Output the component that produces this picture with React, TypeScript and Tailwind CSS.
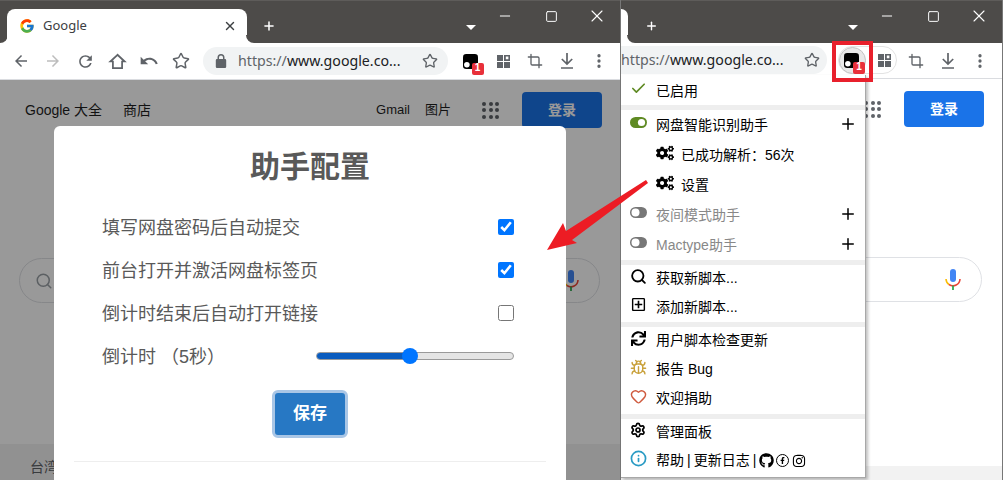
import type { ReactNode } from "react";
import { Bug, Check, Crop, Heart, Info, Minus, MoreVertical, Plus, Search, Settings, Square, Star, X } from "lucide-react";
import { FaCogs, FaFacebookF, FaGithub, FaInstagram, FaRegPlusSquare, FaSync } from "react-icons/fa";
import { FcGoogle } from "react-icons/fc";

const BAR = "bg-[#4d4b49]";

function Flare({ side }: { side: "l" | "r" }) {
  return (
    <div className="h-2 w-2 bg-white">
      <div className={`h-full w-full ${BAR} ${side === "l" ? "rounded-br-[8px]" : "rounded-bl-[8px]"}`} />
    </div>
  );
}

function Caret() {
  return <div className="mt-[24px] h-0 w-0 border-x-[5px] border-t-[5px] border-x-transparent border-t-white" />;
}

function WindowControls() {
  return (
    <div className="ml-[6px] flex text-white">
      <div className="flex h-[30px] w-[46px] items-center justify-center">
        <Minus size={16} strokeWidth={1.5} />
      </div>
      <div className="flex h-[30px] w-[46px] items-center justify-center">
        <Square size={13} strokeWidth={1.8} />
      </div>
      <div className="flex h-[30px] w-[46px] items-center justify-center">
        <X size={20} strokeWidth={1.3} />
      </div>
    </div>
  );
}

function ToolCell({ children }: { children: ReactNode }) {
  return <div className="flex h-[36px] w-[32px] shrink-0 items-center justify-center text-[#5f6368]">{children}</div>;
}

function NavIcons() {
  return (
    <>
      <ToolCell>
        <svg width="18" height="18" viewBox="0 0 24 24" fill="currentColor">
          <path d="M20 11H7.83l5.59-5.59L12 4l-8 8 8 8 1.41-1.41L7.83 13H20v-2z" />
        </svg>
      </ToolCell>
      <ToolCell>
        <svg width="18" height="18" viewBox="0 0 24 24" fill="#bdbdbd">
          <path d="M4 11h12.17l-5.59-5.59L12 4l8 8-8 8-1.41-1.41L16.17 13H4v-2z" />
        </svg>
      </ToolCell>
      <ToolCell>
        <svg width="19" height="19" viewBox="0 0 24 24" fill="currentColor">
          <path d="M17.65 6.35C16.2 4.9 14.21 4 12 4c-4.42 0-7.99 3.58-7.99 8s3.57 8 7.99 8c3.73 0 6.84-2.55 7.73-6h-2.08c-.82 2.33-3.04 4-5.65 4-3.31 0-6-2.69-6-6s2.69-6 6-6c1.66 0 3.14.69 4.22 1.78L13 11h7V4l-2.35 2.35z" />
        </svg>
      </ToolCell>
      <ToolCell>
        <svg width="19" height="19" viewBox="0 0 24 24" fill="none" stroke="currentColor" strokeWidth="2.2">
          <path d="M12 3.5 3 12h3.2v8.5h11.6V12H21z" />
        </svg>
      </ToolCell>
      <ToolCell>
        <svg width="20" height="20" viewBox="0 0 24 24" fill="currentColor">
          <path d="M12.5 8c-2.65 0-5.05.99-6.9 2.6L2 7v9h9l-3.62-3.62c1.39-1.16 3.16-1.88 5.12-1.88 3.54 0 6.55 2.31 7.6 5.5l2.37-.78C21.08 11.03 17.15 8 12.5 8z" />
        </svg>
      </ToolCell>
      <ToolCell>
        <Star size={18} strokeWidth={2} />
      </ToolCell>
    </>
  );
}

function ExtIcon() {
  return (
    <div className="relative h-[15px] w-[15px] -translate-x-[1px]">
      <svg width="15" height="15" viewBox="0 0 14 14">
        <path d="M3 0h8a3 3 0 0 1 3 3v8a3 3 0 0 1-3 3H3a3 3 0 0 1-3-3V3a3 3 0 0 1 3-3z" fill="#000" />
        <circle cx="3.6" cy="10" r="2.6" fill="#fff" />
      </svg>
      <div className="absolute left-[9px] top-[9px] flex h-[12px] w-[12px] items-center justify-center rounded-[2px] bg-[#e8303a] pb-[1px] text-[10px] font-bold leading-none text-white">
        1
      </div>
    </div>
  );
}

function GridIcon() {
  return (
    <svg width="13" height="13" viewBox="0 0 13 13" fill="#5f6368">
      <rect width="6" height="6" />
      <rect y="7" width="6" height="6" />
      <rect x="7" y="7" width="6" height="6" />
      <path d="M7 0h6v6H7zM8.8 1.6v2.6h2.6V1.6z" fillRule="evenodd" />
    </svg>
  );
}

function DownloadIcon() {
  return (
    <svg width="14" height="16" viewBox="0 0 14 16" fill="none" stroke="currentColor" strokeWidth="1.7">
      <path d="M7 0v11M1.8 6 7 11l5.2-5M1 15h12" />
    </svg>
  );
}

function DotsIcon() {
  return <MoreVertical size={18} strokeWidth={2.4} />;
}

function MicIcon() {
  return (
    <svg width="16" height="21" viewBox="0 0 16 21" fill="none">
      <rect x="5" y="0" width="6" height="13" rx="3" fill="#4285f4" />
      <path d="M1 10a7 7 0 0 0 3 5.5" stroke="#fbbc05" strokeWidth="1.6" />
      <path d="M4 15.5a7 7 0 0 0 11-5.5" stroke="#ea4335" strokeWidth="1.6" />
      <path d="M8 16.5V21" stroke="#34a853" strokeWidth="1.8" />
    </svg>
  );
}

// the right window's page is mostly behind the menu, so its links are left out
function GooglePage({ footer, links }: { footer: string; links?: boolean }) {
  return (
    <div className="flex min-h-0 flex-1 flex-col bg-white">
      <div className="flex h-[48px] shrink-0 items-start pl-[25px] pr-[18px] pt-[12px] text-[14px] text-[#1f1f1f]">
        {links && (
          <div className="flex h-[36px] items-center gap-[21px]">
            <span>Google 大全</span>
            <span>商店</span>
          </div>
        )}
        <div className="ml-auto flex h-[36px] shrink-0 items-center">
          {links && (
            <>
              <span className="text-[13px]">Gmail</span>
              <span className="ml-[15px] text-[13px]">图片</span>
            </>
          )}
          <div className="ml-[31px] grid grid-cols-3 gap-[2.5px]">
            {Array.from({ length: 9 }).map((_, i) => (
              <div key={i} className="h-1 w-1 rounded-full bg-[#5f6368]" />
            ))}
          </div>
          <div className="ml-[23px] flex h-[36px] w-[80px] shrink-0 items-center justify-center rounded-[4px] bg-[#1a73e8] text-[14px] font-bold text-white">
            登录
          </div>
        </div>
      </div>
      <div className="ml-[19px] mr-[20px] mt-[130px] flex h-[45px] shrink-0 items-center justify-between rounded-full border border-[#dfe1e5] pl-[15px] pr-[20px]">
        <Search size={18} className="text-[#9aa0a6]" />
        <MicIcon />
      </div>
      <div className={`mt-auto shrink-0 bg-[#f2f2f2] pl-[30px] pt-[13px] text-[14px] text-[#5f6368] ${footer}`}>
        {links && "台湾"}
      </div>
    </div>
  );
}

function ConfigRow({ label, children }: { label: string; children: ReactNode }) {
  return (
    <div className="flex h-[43px] items-center justify-between">
      <span className="pt-[2px]">{label}</span>
      {children}
    </div>
  );
}

function ConfigModal() {
  return (
    <div className="ml-[54px] mt-[46px] h-[400px] w-[512px] rounded-t-[6px] bg-white text-[#595959]">
      <div className="pt-[18px] text-center text-[30px] font-bold leading-[46px]">助手配置</div>
      <div className="mt-[16px] pl-[48px] pr-[52px] text-[18px]">
        <ConfigRow label="填写网盘密码后自动提交">
          <input type="checkbox" defaultChecked className="mb-[2px] h-4 w-4 accent-[#0075ff]" />
        </ConfigRow>
        <ConfigRow label="前台打开并激活网盘标签页">
          <input type="checkbox" defaultChecked className="mb-[2px] h-4 w-4 accent-[#0075ff]" />
        </ConfigRow>
        <ConfigRow label="倒计时结束后自动打开链接">
          <input type="checkbox" className="mb-[2px] h-4 w-4 accent-[#0075ff]" />
        </ConfigRow>
        <ConfigRow label="倒计时 （5秒）">
          <div className="relative mb-[2px] h-2 w-[198px]">
            <div className="h-full w-full overflow-hidden rounded-full border border-[#9a9a9a] bg-[#e5e5e5]">
              <div className="h-full w-[47%] bg-[#0a5cbf]" />
            </div>
            <div className="absolute left-[86px] top-[-4px] h-4 w-4 rounded-full bg-[#0075ff]" />
          </div>
        </ConfigRow>
      </div>
      <div className="mt-[12px] flex justify-center">
        <div className="flex h-[48px] w-[76px] items-center justify-center rounded-[6px] border-[3px] border-[#a9c6e6] bg-[#2778c4] text-[17px] font-bold text-white">
          保存
        </div>
      </div>
      <div className="mx-[20px] mt-[23px] border-t border-[#eeeeee]" />
    </div>
  );
}

function Toggle({ on }: { on?: boolean }) {
  return on ? (
    <svg width="17" height="11" viewBox="0 0 17 11">
      <rect width="17" height="11" rx="5.5" fill="#5f8a23" />
      <circle cx="11.5" cy="5.5" r="3.6" fill="#fff" />
    </svg>
  ) : (
    <svg width="17" height="11" viewBox="0 0 17 11">
      <rect width="17" height="11" rx="5.5" fill="#777" />
      <circle cx="5.5" cy="5.5" r="4" fill="#fff" />
    </svg>
  );
}

function MenuRow({
  icon,
  h = "h-[30px] pb-[2px]",
  dim,
  plus,
  children,
}: {
  icon?: ReactNode;
  h?: string;
  dim?: boolean;
  plus?: boolean;
  children: ReactNode;
}) {
  return (
    <div className={`flex items-center pr-[8px] text-[14px] ${h} ${dim ? "text-[#888888]" : "text-black"}`}>
      <div className="flex w-[35px] shrink-0 justify-center pb-[3px] pr-[1px]">{icon}</div>
      <div className="flex min-w-0 flex-1 items-center pt-[2px]">{children}</div>
      {plus && <Plus size={18} strokeWidth={2} className="text-black" />}
    </div>
  );
}

function SubRow({ children }: { children: ReactNode }) {
  return (
    <MenuRow>
      <FaCogs size={18} className="mr-[7px] -translate-y-[2px]" />
      {children}
    </MenuRow>
  );
}

function Band() {
  return <div className="h-[5px] bg-[#eeeeee]" />;
}

function ScriptMenu() {
  return (
    <div className="absolute left-0 top-[75px] z-10 w-[245px] border-b border-r border-[#a8a8a8] bg-white shadow-[2px_2px_3px_rgba(0,0,0,0.25)]">
      <MenuRow h="h-[30px]" icon={<Check size={17} strokeWidth={2.4} className="text-[#5f8a23]" />}>
        已启用
      </MenuRow>
      <Band />
      <MenuRow plus icon={<Toggle on />}>
        网盘智能识别助手
      </MenuRow>
      <SubRow>已成功解析：56次</SubRow>
      <SubRow>设置</SubRow>
      <MenuRow dim plus icon={<Toggle />}>
        夜间模式助手
      </MenuRow>
      <MenuRow dim plus icon={<Toggle />}>
        Mactype助手
      </MenuRow>
      <Band />
      <MenuRow h="h-[29px] pb-[4px]" icon={<Search size={17} strokeWidth={2.6} />}>
        获取新脚本...
      </MenuRow>
      <MenuRow h="h-[28px] pb-[4px]" icon={<FaRegPlusSquare size={15} />}>
        添加新脚本...
      </MenuRow>
      <Band />
      <MenuRow h="h-[29px] pb-[4px]" icon={<FaSync size={15} />}>
        用户脚本检查更新
      </MenuRow>
      <MenuRow h="h-[29px] pb-[4px]" icon={<Bug size={17} strokeWidth={2} className="text-[#c9a13b]" />}>
        报告 Bug
      </MenuRow>
      <MenuRow h="h-[29px] pb-[4px]" icon={<Heart size={17} strokeWidth={2} className="text-[#cf5a3e]" />}>
        欢迎捐助
      </MenuRow>
      <Band />
      <MenuRow h="h-[29px] pb-[5px]" icon={<Settings size={16} strokeWidth={2.6} />}>
        管理面板
      </MenuRow>
      <MenuRow h="h-[29px] pb-[6px]" icon={<Info size={17} strokeWidth={2.4} className="text-[#2a9bc4]" />}>
        帮助
        <span className="mx-[3px]">|</span>
        更新日志
        <span className="mx-[3px]">|</span>
        <FaGithub size={15} />
        <span className="ml-[2px] flex h-[13px] w-[13px] items-center justify-center rounded-full border border-black">
          <FaFacebookF size={7} />
        </span>
        <FaInstagram size={14} className="ml-[3px]" />
      </MenuRow>
    </div>
  );
}

function LeftWindow() {
  return (
    <div className="flex h-[480px] w-[621px] shrink-0 flex-col border-r border-[#777777]">
      <div className={`flex h-[43px] shrink-0 border-t border-t-[#5e5c5a] ${BAR}`}>
        <div className="flex items-end">
          <Flare side="l" />
          <div className="-ml-px flex h-[34px] w-[240px] items-center rounded-t-[8px] bg-white pl-[12px] pr-[10px] font-['Noto_Sans'] text-[13px] text-[#3c4043]">
            <FcGoogle size={16} />
            <span className="ml-[8px] flex-1">Google</span>
            <X size={14} strokeWidth={2.4} />
          </div>
          <div className="-ml-px">
            <Flare side="r" />
          </div>
        </div>
        <Plus size={18} strokeWidth={2.6} className="ml-[8px] mt-[16px] text-white" />
        <div className="ml-[190px] flex">
          <Caret />
          <WindowControls />
        </div>
      </div>
      <div className="flex h-[37px] shrink-0 items-start border-b border-[#dadce0] bg-white pl-[5px]">
        <NavIcons />
        <div className="ml-[6px] mt-[4px] flex h-[28px] w-[245px] items-center rounded-full bg-[#f1f3f4] pl-[12px] pr-[10px] font-['Noto_Sans'] text-[14.2px]">
          <svg width="12" height="14" viewBox="0 0 12 14" fill="#5f6368">
            <path d="M10 5H9.5V3.5a3.5 3.5 0 0 0-7 0V5H2a1.2 1.2 0 0 0-1.2 1.2v6.6A1.2 1.2 0 0 0 2 14h8a1.2 1.2 0 0 0 1.2-1.2V6.2A1.2 1.2 0 0 0 10 5zM4 5V3.5a2 2 0 0 1 4 0V5z" />
          </svg>
          <span className="ml-[11px] flex-1 truncate text-[#202124]">
            <span className="text-[#5f6368]">https://</span>www.google.co...
          </span>
          <Star size={16} strokeWidth={2} className="text-[#5f6368]" />
        </div>
        <div className="ml-[7px] flex">
          <ToolCell>
            <ExtIcon />
          </ToolCell>
          <ToolCell>
            <GridIcon />
          </ToolCell>
          <ToolCell>
            <Crop size={16} strokeWidth={2} />
          </ToolCell>
          <ToolCell>
            <DownloadIcon />
          </ToolCell>
          <ToolCell>
            <DotsIcon />
          </ToolCell>
        </div>
      </div>
      <div className="relative flex min-h-0 flex-1 flex-col overflow-hidden">
        <GooglePage footer="h-[36px]" links />
        <div className="absolute inset-0 bg-black/40">
          <ConfigModal />
        </div>
      </div>
    </div>
  );
}

function RightWindow() {
  return (
    <div className="relative flex h-[480px] w-[382px] shrink-0 flex-col border-r border-[#777777]">
      <div className={`flex h-[43px] shrink-0 border-t border-t-[#5e5c5a] ${BAR}`}>
        <div className="flex items-end">
          <div className="h-[34px] w-[7px] rounded-tr-[8px] bg-white" />
          <div className="-ml-px">
            <Flare side="r" />
          </div>
        </div>
        <Plus size={18} strokeWidth={2.6} className="ml-[10px] mt-[16px] text-white" />
        <div className="ml-[190px] flex">
          <Caret />
          <WindowControls />
        </div>
      </div>
      <div className="flex h-[36px] shrink-0 items-start border-b border-[#dadce0] bg-white">
        <div className="mt-[3px] flex h-[28px] w-[206px] items-center overflow-hidden rounded-r-full bg-[#f1f3f4] pr-[7px] font-['Noto_Sans'] text-[14.2px]">
          <span className="flex-1 truncate text-[#202124]">
            <span className="text-[#5f6368]">https://</span>www.google.co...
          </span>
          <Star size={16} strokeWidth={2} className="text-[#5f6368]" />
        </div>
        <div className="ml-[11px] mt-[3px] flex h-[28px] w-[59px] items-center rounded-full border border-[#e3e3e3]">
          <div className="flex h-[27px] w-[27px] shrink-0 items-center justify-center rounded-full border border-[#c4c4c4] bg-[#e8e8e8]">
            <ExtIcon />
          </div>
          <div className="ml-[12px]">
            <GridIcon />
          </div>
        </div>
        <div className="ml-[3px] flex">
          <ToolCell>
            <Crop size={16} strokeWidth={2} />
          </ToolCell>
          <ToolCell>
            <DownloadIcon />
          </ToolCell>
          <ToolCell>
            <DotsIcon />
          </ToolCell>
        </div>
      </div>
      <GooglePage footer="h-[14px]" />
      <ScriptMenu />
      <div className="absolute left-[211px] top-[41px] z-20 h-[41px] w-[41px] border-[4px] border-[#e8202c]" />
    </div>
  );
}

export default function App() {
  return (
    <div className="relative flex h-[480px] w-[1003px] overflow-hidden bg-white font-['Liberation_Sans','Noto_Sans_CJK_SC',sans-serif]">
      <LeftWindow />
      <RightWindow />
      <svg className="absolute left-[540px] top-[170px] z-30" width="115" height="85" viewBox="540 170 115 85">
        <path d="M547 250 563 223 566 231 646 180 648 183 572 240 577 243z" fill="#ed1c24" />
      </svg>
    </div>
  );
}
